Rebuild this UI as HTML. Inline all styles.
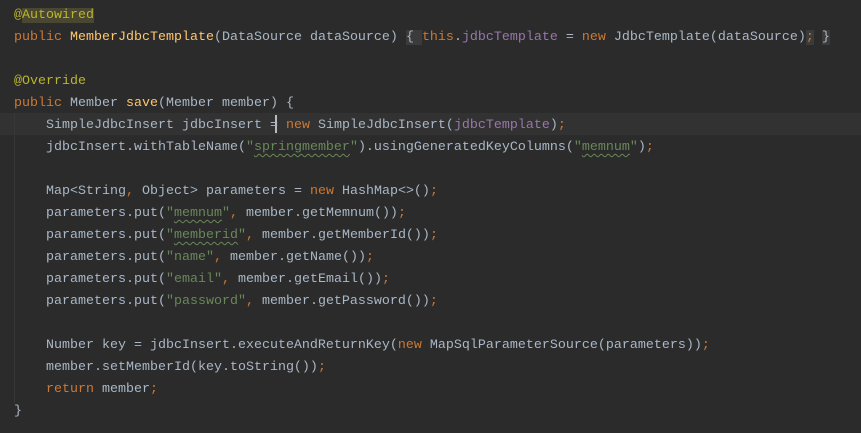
<!DOCTYPE html>
<html><head><style>
html,body{margin:0;padding:0;background:#2b2b2b;}
body{width:861px;height:433px;overflow:hidden;position:relative;font-family:"Liberation Mono",monospace;font-size:13.33px;color:#a9b7c6;}
.code{position:absolute;left:14px;top:5px;white-space:pre;line-height:22px;}
.k{color:#cc7832}.a{color:#bbb529}.m{color:#ffc66d}.f{color:#9876aa}.s{color:#6a8759}
.w{text-decoration:underline wavy #6a8759;text-decoration-thickness:1px;text-underline-offset:3px}
.cur{position:absolute;left:0;top:113px;width:861px;height:22px;background:#323232;}
.guide{position:absolute;left:14px;top:113px;width:1px;height:290px;background:#373737;}
.hl{background:#4a4731}
.fb{background:#3b3b3b}
.caret{position:absolute;left:275px;top:115px;width:2px;height:18px;background:#bbbbbb}
</style></head><body>
<div class="cur"></div>
<div class="guide"></div>
<div class="caret"></div>
<div class="code"><span class="a">@<span class="hl">Autowired</span></span>
<span class="k">public </span><span class="m">MemberJdbcTemplate</span>(DataSource dataSource) <span class="fb">{ </span><span class="k">this</span>.<span class="f">jdbcTemplate</span> = <span class="k">new </span>JdbcTemplate(dataSource)<span class="k fb">;</span> <span class="fb">}</span>

<span class="a">@Override</span>
<span class="k">public </span>Member <span class="m">save</span>(Member member) {
    SimpleJdbcInsert jdbcInsert = <span class="k">new </span>SimpleJdbcInsert(<span class="f">jdbcTemplate</span>)<span class="k">;</span>
    jdbcInsert.withTableName(<span class="s">"<span class="w">springmember</span>"</span>).usingGeneratedKeyColumns(<span class="s">"<span class="w">memnum</span>"</span>)<span class="k">;</span>

    Map&lt;String<span class="k">, </span>Object&gt; parameters = <span class="k">new </span>HashMap&lt;&gt;()<span class="k">;</span>
    parameters.put(<span class="s">"<span class="w">memnum</span>"</span><span class="k">, </span>member.getMemnum())<span class="k">;</span>
    parameters.put(<span class="s">"<span class="w">memberid</span>"</span><span class="k">, </span>member.getMemberId())<span class="k">;</span>
    parameters.put(<span class="s">"name"</span><span class="k">, </span>member.getName())<span class="k">;</span>
    parameters.put(<span class="s">"email"</span><span class="k">, </span>member.getEmail())<span class="k">;</span>
    parameters.put(<span class="s">"password"</span><span class="k">, </span>member.getPassword())<span class="k">;</span>

    Number key = jdbcInsert.executeAndReturnKey(<span class="k">new </span>MapSqlParameterSource(parameters))<span class="k">;</span>
    member.setMemberId(key.toString())<span class="k">;</span>
    <span class="k">return </span>member<span class="k">;</span>
}</div>
</body></html>
